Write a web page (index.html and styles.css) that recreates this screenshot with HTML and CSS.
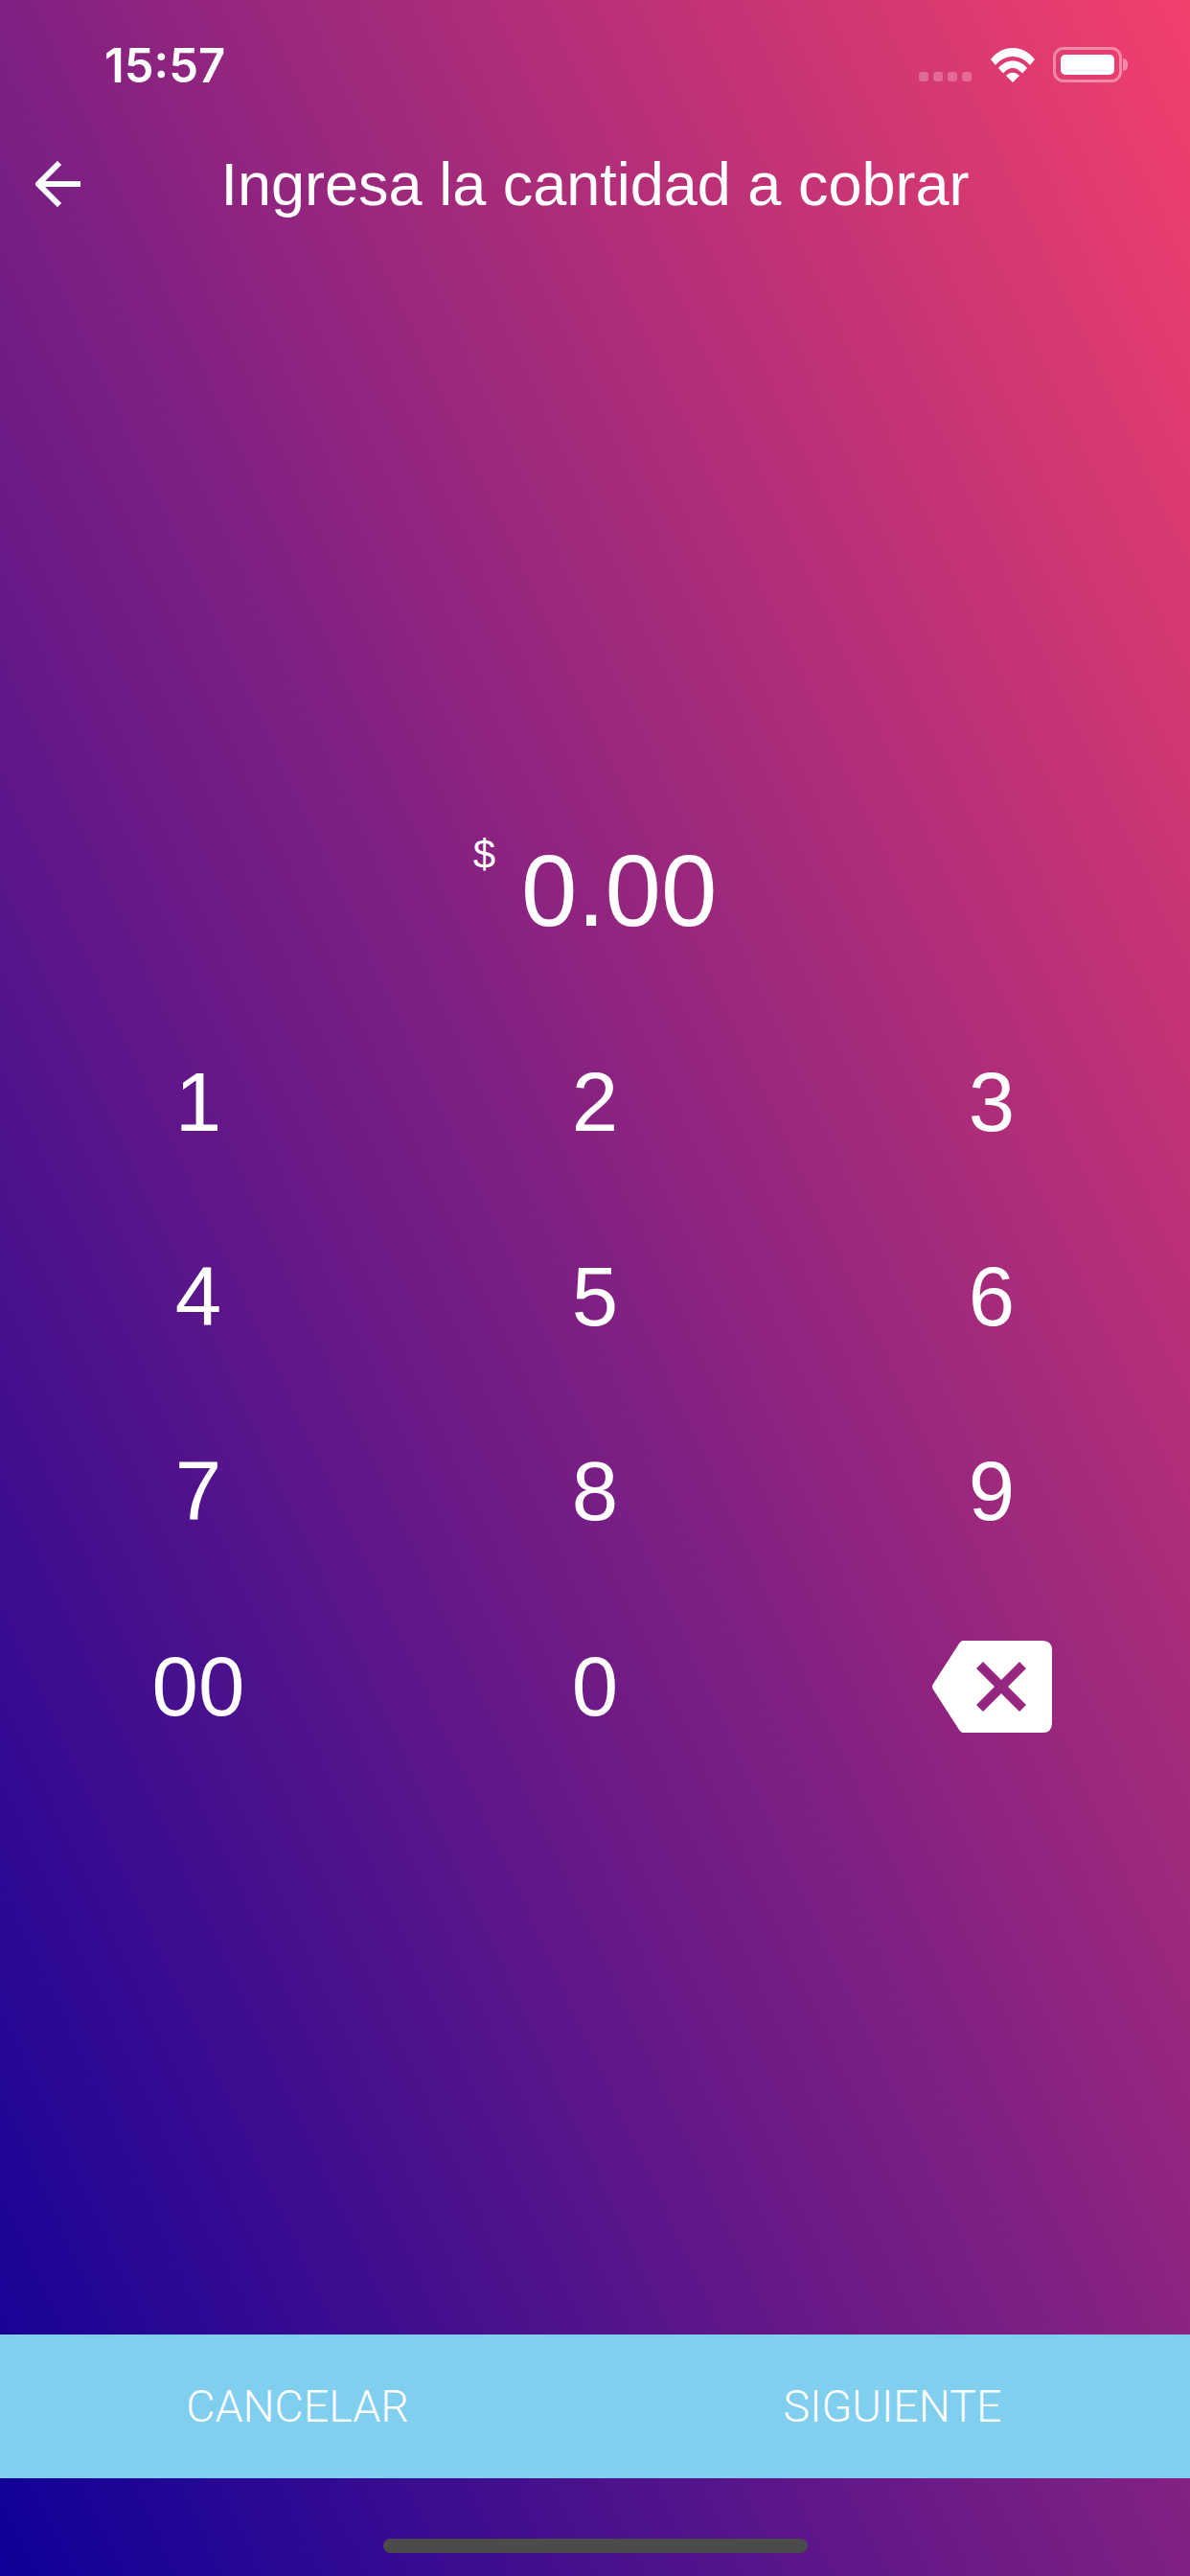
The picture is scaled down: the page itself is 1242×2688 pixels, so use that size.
FILE: index.html
```html
<!DOCTYPE html>
<html lang="es">
<head>
    <meta charset="UTF-8">
    <meta name="viewport" content="width=device-width, initial-scale=1.0">
    <title>Ingresa la cantidad a cobrar</title>
    <link rel="stylesheet" href="styles.css">
</head>
<body>
    <div class="screen">
        <div class="status-bar">
            <span class="time">15:57</span>
            <div class="status-icons">
                <div class="signal"><i></i><i></i><i></i><i></i></div>
                <svg class="wifi" width="48" height="37" viewBox="0 0 48 37">
                    <path d="M1 13 C13 -3 35 -3 47 13 L42 19 C32 7 16 7 6 19 Z" fill="#fff"/>
                    <path d="M9 22 C17 12 31 12 39 22 L34 27.500 C28 20 20 20 14 27.500 Z" fill="#fff"/>
                    <path d="M17 30 C21 25.500 27 25.500 31 30 L24 37 Z" fill="#fff"/>
                </svg>
                <div class="battery">
                    <div class="battery-fill"></div>
                </div>
                <div class="battery-nub"></div>
            </div>
        </div>

        <div class="header">
            <svg class="back" width="48" height="48" viewBox="0 0 48 48">
                <path d="M25 2 L3 24 L25 46 M3 24 H47" fill="none" stroke="#fff" stroke-width="6"/>
            </svg>
            <h1>Ingresa la cantidad a cobrar</h1>
        </div>

        <div class="amount">
            <span class="currency">$</span>
            <span class="value">0.00</span>
        </div>

        <div class="keypad">
            <div class="key">1</div>
            <div class="key">2</div>
            <div class="key">3</div>
            <div class="key">4</div>
            <div class="key">5</div>
            <div class="key">6</div>
            <div class="key">7</div>
            <div class="key">8</div>
            <div class="key">9</div>
            <div class="key">00</div>
            <div class="key">0</div>
            <div class="key">
                <svg class="backspace" width="126" height="96" viewBox="0 0 126 96">
                    <path fill="#fff" fill-rule="evenodd" d="M33 0 H116 Q126 0 126 10 V86 Q126 96 116 96 H33 Q31 96 29 93 L2 51 Q0 48 2 45 L29 3 Q31 0 33 0 Z M73 41 L92 22 L99 29 L80 48 L99 67 L92 74 L73 55 L54 74 L47 67 L66 48 L47 29 L54 22 Z"/>
                </svg>
            </div>
        </div>

        <div class="actions">
            <div class="action">CANCELAR</div>
            <div class="action">SIGUIENTE</div>
        </div>

        <div class="home-area">
            <div class="home-indicator"></div>
        </div>
    </div>
</body>
</html>
```

FILE: styles.css
```css
* {
    box-sizing: border-box;
}
html, body {
    margin: 0;
    padding: 0;
}
body {
    font-family: 'Liberation Sans', Arial, sans-serif;
    color: #fff;
}
.screen {
    width: 1242px;
    height: 2688px;
    display: flex;
    flex-direction: column;
    overflow: hidden;
    background: linear-gradient(to top right, #0e0099, #f2406c);
}
.status-bar {
    height: 134px;
    padding: 45px 65px 0 109px;
    display: flex;
    justify-content: space-between;
    align-items: flex-start;
    flex-shrink: 0;
}
.time {
    font-family: 'Inter', sans-serif;
    font-weight: 600;
    font-size: 49px;
    line-height: 48px;
}
.status-icons {
    display: flex;
    align-items: flex-start;
    padding-top: 4px;
}
.signal {
    display: flex;
    gap: 5px;
    margin-top: 26px;
    margin-right: 19px;
}
.signal i {
    display: block;
    width: 10px;
    height: 10px;
    border-radius: 3px;
    background: rgba(255,255,255,0.25);
}
.wifi {
    margin-right: 18px;
}
.battery {
    width: 72px;
    height: 37px;
    padding: 5px;
    border: 3px solid rgba(255,255,255,0.4);
    border-radius: 11px;
}
.battery-fill {
    height: 100%;
    border-radius: 5px;
    background: #fff;
}
.battery-nub {
    width: 5px;
    height: 13px;
    margin-top: 12px;
    margin-left: 1px;
    border-radius: 0 6px 6px 0;
    background: rgba(255,255,255,0.4);
}
.header {
    height: 116px;
    display: flex;
    align-items: center;
    justify-content: center;
    position: relative;
    flex-shrink: 0;
}
.header h1 {
    margin: 0;
    font-weight: normal;
    font-size: 63px;
    line-height: 1;
}
.back {
    position: absolute;
    left: 37px;
    top: 34px;
}
.amount {
    margin-top: 620px;
    height: 120px;
    display: flex;
    justify-content: center;
    align-items: flex-start;
    gap: 27px;
    flex-shrink: 0;
}
.currency {
    font-size: 42px;
    line-height: 46px;
    margin-top: -1px;
}
.value {
    font-size: 105px;
    line-height: 120px;
}
.keypad {
    margin-top: 58px;
    display: grid;
    grid-template-columns: repeat(3, 414px);
    grid-auto-rows: 203.300px;
    flex-shrink: 0;
}
.key {
    display: flex;
    align-items: center;
    justify-content: center;
    font-size: 87px;
}
.actions {
    margin-top: auto;
    height: 150px;
    display: grid;
    grid-template-columns: 1fr 1fr;
    background: #81cfef;
    flex-shrink: 0;
}
.action {
    display: flex;
    align-items: center;
    justify-content: center;
    font-family: 'Roboto', sans-serif;
    font-weight: 300;
    font-size: 46.500px;
}
.home-area {
    height: 102px;
    padding-top: 63px;
    display: flex;
    justify-content: center;
    flex-shrink: 0;
}
.home-indicator {
    width: 443px;
    height: 15px;
    border-radius: 8px;
    background: #4b4b4b;
}
```
